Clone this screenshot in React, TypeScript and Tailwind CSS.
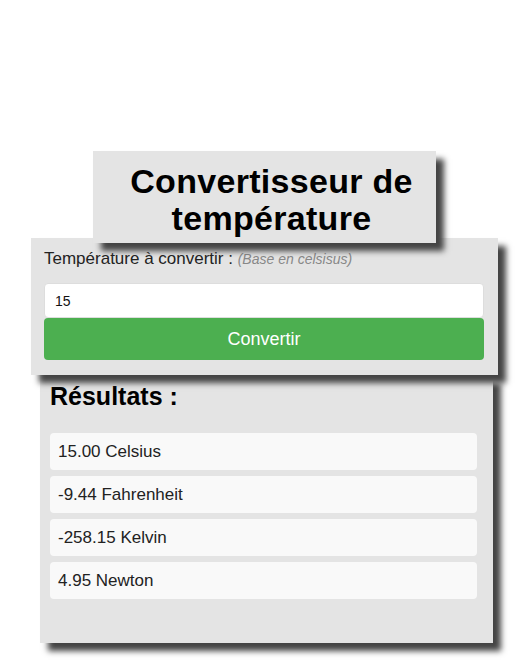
export default function App() {
  const results = ['15.00 Celsius', '-9.44 Fahrenheit', '-258.15 Kelvin', '4.95 Newton'];

  return (
    <div className="min-h-[669px] bg-white pt-[151px] font-['Liberation_Sans',Arial,sans-serif] text-[#111]">
      {/* Title */}
      <div className="relative z-30 mx-auto w-[343px] bg-[#e4e4e4] pt-[12px] pb-[6px] pl-[14px] text-center shadow-[8px_8px_6px_#444]">
        <h1 className="text-[34px] leading-[37px] font-bold tracking-[0.3px] text-black">
          Convertisseur de température
        </h1>
      </div>

      {/* Form */}
      <div className="relative z-20 mx-auto -mt-[5px] w-[467px] bg-[#e4e4e4] pt-[12px] pr-[14px] pb-[15px] pl-[13px] shadow-[8px_8px_6px_#444]">
        <label className="block text-[17px] leading-[18px] text-[#222]">
          Température à convertir : <span className="text-[14px] text-[#888] italic">(Base en celsisus)</span>
        </label>
        <input
          type="text"
          defaultValue="15"
          className="mt-[15px] block h-[35px] w-full rounded-[4px] border border-[#ddd] bg-white px-[10px] text-[14px] text-[#111] outline-none"
        />
        <button className="block h-[42px] w-full rounded-[4px] bg-[#4caf50] text-[18px] text-white">
          Convertir
        </button>
      </div>

      {/* Results */}
      <div className="relative z-10 ml-[40px] w-[453px] bg-[#e4e4e4] pt-[7px] pr-[16px] pb-[44px] pl-[10px] shadow-[8px_8px_6px_#444]">
        <h2 className="text-[25px] leading-[28px] font-bold text-black">Résultats :</h2>
        <div className="mt-[23px] flex flex-col gap-[6px]">
          {results.map((r) => (
            <div key={r} className="flex h-[37px] items-center rounded-[4px] bg-[#f9f9f9] pl-[8px] text-[17px] text-[#222]">
              {r}
            </div>
          ))}
        </div>
      </div>
    </div>
  );
}
